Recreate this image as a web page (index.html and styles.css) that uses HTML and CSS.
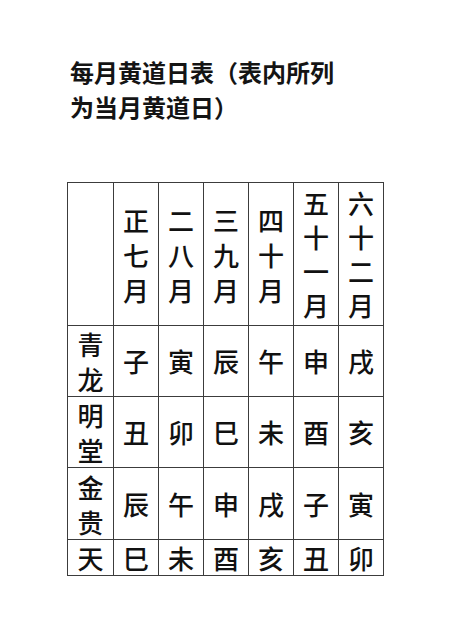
FILE: index.html
```html
<!DOCTYPE html>
<html lang="zh-CN">
<head>
<meta charset="utf-8">
<title>每月黄道日表</title>
<link rel="stylesheet" href="styles.css">
</head>
<body>
<div class="page">
  <h1 class="title">每月黄道日表（表内所列<br>为当月黄道日）</h1>
  <table class="grid">
    <colgroup>
      <col class="c-first">
      <col class="c-m"><col class="c-m"><col class="c-m"><col class="c-m"><col class="c-m"><col class="c-m">
    </colgroup>
    <tr class="r-head">
      <td></td>
      <td class="hd">正<br>七<br>月</td>
      <td class="hd">二<br>八<br>月</td>
      <td class="hd">三<br>九<br>月</td>
      <td class="hd">四<br>十<br>月</td>
      <td class="hd tight">五<br>十<br>一<br>月</td>
      <td class="hd tight">六<br>十<br>二<br>月</td>
    </tr>
    <tr class="r-body">
      <td class="name">青<br>龙</td>
      <td>子</td><td>寅</td><td>辰</td><td>午</td><td>申</td><td>戌</td>
    </tr>
    <tr class="r-body">
      <td class="name">明<br>堂</td>
      <td>丑</td><td>卯</td><td>巳</td><td>未</td><td>酉</td><td>亥</td>
    </tr>
    <tr class="r-body r-body3">
      <td class="name">金<br>贵</td>
      <td>辰</td><td>午</td><td>申</td><td>戌</td><td>子</td><td>寅</td>
    </tr>
    <tr class="r-last">
      <td class="name">天</td>
      <td>巳</td><td>未</td><td>酉</td><td>亥</td><td>丑</td><td>卯</td>
    </tr>
  </table>
</div>
</body>
</html>
```

FILE: styles.css
```css
html, body {
  margin: 0;
  padding: 0;
  background: #ffffff;
}
body {
  font-family: "Noto Sans CJK SC", "Noto Sans", sans-serif;
  color: #111111;
}
.page {
  padding: 54px 0 0 67px;
}
.title {
  margin: 0 0 0 3px;
  font-size: 24px;
  line-height: 35px;
  font-weight: 700;
  color: #141414;
  letter-spacing: 0;
}
.grid {
  margin-top: 58px;
  border-collapse: collapse;
  table-layout: fixed;
  width: 317px;
}
.c-first { width: 46px; }
.c-m { width: 45px; }
.grid td {
  border: 1px solid #3c3c3c;
  padding: 0;
  text-align: center;
  vertical-align: middle;
  font-size: 26px;
  line-height: 34px;
  font-weight: 500;
  color: #111111;
}
.r-head td { height: 142px; }
.grid td.hd { line-height: 35px; }
.grid td.hd.tight { line-height: 34px; }
.r-body td { height: 70px; }
.r-body3 td { height: 71px; }
.r-last td { height: 35px; }
.grid td.name { line-height: 35px; }
.r-last td.name { line-height: 34px; }
```
